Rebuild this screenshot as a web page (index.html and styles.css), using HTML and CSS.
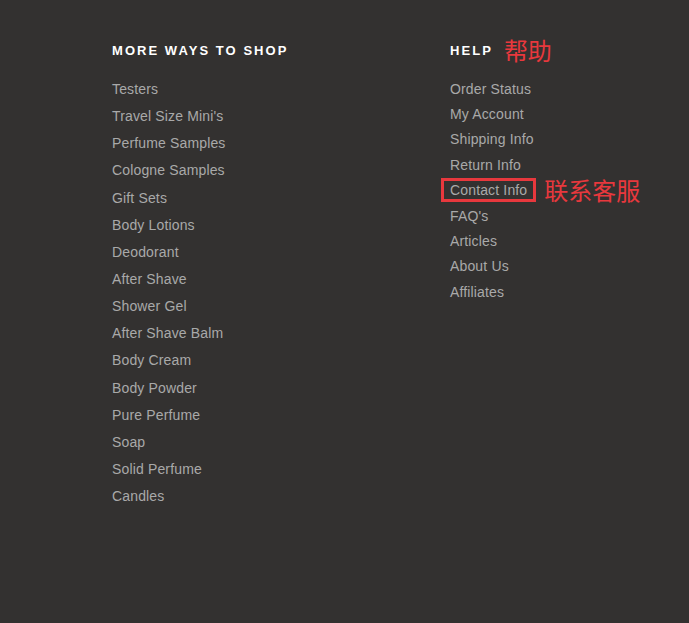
FILE: index.html
```html
<!DOCTYPE html>
<html lang="en">
<head>
  <meta charset="UTF-8">
  <meta name="viewport" content="width=device-width, initial-scale=1.0">
  <title>Footer links</title>
  <link rel="stylesheet" href="styles.css">
</head>
<body>
  <footer class="footer">
    <section class="col col-shop">
      <h3 class="col-title">More Ways To Shop</h3>
      <ul class="links">
        <li><a href="#">Testers</a></li>
        <li><a href="#">Travel Size Mini's</a></li>
        <li><a href="#">Perfume Samples</a></li>
        <li><a href="#">Cologne Samples</a></li>
        <li><a href="#">Gift Sets</a></li>
        <li><a href="#">Body Lotions</a></li>
        <li><a href="#">Deodorant</a></li>
        <li><a href="#">After Shave</a></li>
        <li><a href="#">Shower Gel</a></li>
        <li><a href="#">After Shave Balm</a></li>
        <li><a href="#">Body Cream</a></li>
        <li><a href="#">Body Powder</a></li>
        <li><a href="#">Pure Perfume</a></li>
        <li><a href="#">Soap</a></li>
        <li><a href="#">Solid Perfume</a></li>
        <li><a href="#">Candles</a></li>
      </ul>
    </section>

    <section class="col col-help">
      <h3 class="col-title">Help <span class="note note-title">帮助</span></h3>
      <ul class="links">
        <li><a href="#">Order Status</a></li>
        <li><a href="#">My Account</a></li>
        <li><a href="#">Shipping Info</a></li>
        <li><a href="#">Return Info</a></li>
        <li><a href="#" class="marked">Contact Info</a><span class="note note-item">联系客服</span></li>
        <li><a href="#">FAQ's</a></li>
        <li><a href="#">Articles</a></li>
        <li><a href="#">About Us</a></li>
        <li><a href="#">Affiliates</a></li>
      </ul>
    </section>
  </footer>
</body>
</html>
```

FILE: styles.css
```css
* {
  margin: 0;
  padding: 0;
  box-sizing: border-box;
}

body {
  font-family: "Liberation Sans", Arial, "Noto Sans CJK SC", sans-serif;
  background-color: #333130;
  color: #a9a9a9;
  height: 623px;
}

/* Footer columns */
.footer {
  display: flex;
  padding: 40px 0 0 112px;
}

.col-shop {
  width: 338px;
}

.col-title {
  display: flex;
  align-items: center;
  height: 20px;
  font-size: 13px;
  font-weight: bold;
  letter-spacing: 2.05px;
  text-transform: uppercase;
  color: #fff;
}

.links {
  list-style: none;
}

.col-shop .links {
  margin-top: 15px;
}

.col-shop .links li {
  height: 27.15px;
  line-height: 27.15px;
}

.col-help .links {
  margin-top: 16px;
}

.col-help .links li {
  display: flex;
  align-items: center;
  height: 25.4px;
}

.links a {
  font-size: 14px;
  letter-spacing: 0.15px;
  color: #a9a9a9;
  text-decoration: none;
}

/* Red annotations */
.note {
  font-family: "Noto Sans CJK SC", sans-serif;
  color: #e8383d;
  letter-spacing: 0;
  font-weight: normal;
  line-height: 1;
}

.note-title {
  font-size: 24px;
  margin-left: 11px;
}

.note-item {
  font-size: 24px;
  margin-left: 8px;
}

.links a.marked {
  margin-left: -9px;
  padding: 1px 6px 1px 6px;
  border: 3px solid #e8383d;
  line-height: 16px;
}
```
